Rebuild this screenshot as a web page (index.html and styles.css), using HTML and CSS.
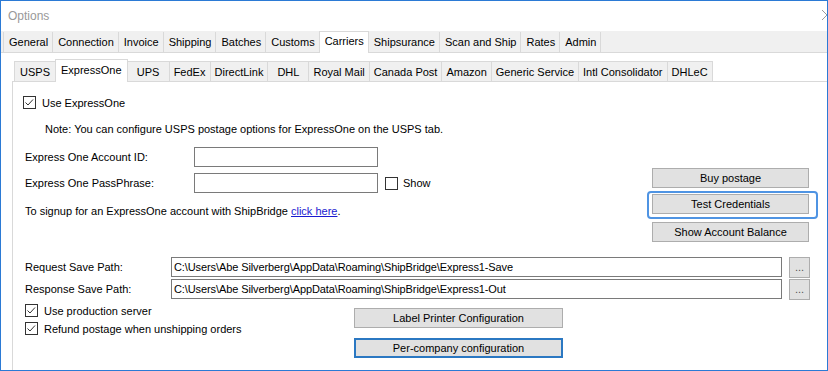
FILE: index.html
```html
<!DOCTYPE html>
<html lang="en">
<head>
    <meta charset="UTF-8">
    <meta name="viewport" content="width=device-width, initial-scale=1.0">
    <title>Options</title>
    <link rel="stylesheet" href="styles.css">
</head>
<body>
    <div class="window">
        <!-- Title bar -->
        <div class="titlebar">
            <span class="title">Options</span>
            <svg class="close" width="10" height="10" viewBox="0 0 10 10"><path d="M0 0L10 10M10 0L0 10" stroke="#9a9a9a" stroke-width="1" fill="none"/></svg>
        </div>

        <!-- Main tabs -->
        <div class="tabs">
            <div class="tab">General</div>
            <div class="tab">Connection</div>
            <div class="tab">Invoice</div>
            <div class="tab">Shipping</div>
            <div class="tab">Batches</div>
            <div class="tab">Customs</div>
            <div class="tab active">Carriers</div>
            <div class="tab">Shipsurance</div>
            <div class="tab">Scan and Ship</div>
            <div class="tab">Rates</div>
            <div class="tab last">Admin</div>
        </div>

        <div class="page">
            <!-- Carrier tabs -->
            <div class="subtabs">
                <div class="subtab">USPS</div>
                <div class="subtab active">ExpressOne</div>
                <div class="subtab">UPS</div>
                <div class="subtab">FedEx</div>
                <div class="subtab">DirectLink</div>
                <div class="subtab">DHL</div>
                <div class="subtab">Royal Mail</div>
                <div class="subtab">Canada Post</div>
                <div class="subtab">Amazon</div>
                <div class="subtab">Generic Service</div>
                <div class="subtab">Intl Consolidator</div>
                <div class="subtab last">DHLeC</div>
            </div>

            <div class="panel">
                <div class="top">
                    <div class="fields">
                        <label class="check use-check">
                            <span class="box"><svg width="11" height="11" viewBox="0 0 11 11"><path d="M1.5 5.5L4 8L9 2.5" stroke="#333" stroke-width="1" fill="none"/></svg></span>
                            Use ExpressOne
                        </label>
                        <div class="note">Note: You can configure USPS postage options for ExpressOne on the USPS tab.</div>
                        <div class="field-row">
                            <span class="field-label">Express One Account ID:</span>
                            <span class="input"></span>
                        </div>
                        <div class="field-row pass-row">
                            <span class="field-label">Express One PassPhrase:</span>
                            <span class="input"></span>
                            <label class="check show-check"><span class="box"></span>Show</label>
                        </div>
                        <div class="signup">To signup for an ExpressOne account with ShipBridge <a href="#" class="link">click here</a>.</div>
                    </div>

                    <div class="actions">
                        <button class="btn">Buy postage</button>
                        <button class="btn focus-ring">Test Credentials</button>
                        <button class="btn balance">Show Account Balance</button>
                    </div>
                </div>

                <!-- Save paths -->
                <div class="paths">
                    <div class="path-row">
                        <span class="path-label">Request Save Path:</span>
                        <span class="input path-input">C:\Users\Abe Silverberg\AppData\Roaming\ShipBridge\Express1-Save</span>
                        <button class="btn browse">...</button>
                    </div>
                    <div class="path-row">
                        <span class="path-label">Response Save Path:</span>
                        <span class="input path-input">C:\Users\Abe Silverberg\AppData\Roaming\ShipBridge\Express1-Out</span>
                        <button class="btn browse">...</button>
                    </div>
                </div>

                <div class="bottom">
                    <div class="options">
                        <label class="check">
                            <span class="box"><svg width="11" height="11" viewBox="0 0 11 11"><path d="M1.5 5.5L4 8L9 2.5" stroke="#333" stroke-width="1" fill="none"/></svg></span>
                            Use production server
                        </label>
                        <label class="check">
                            <span class="box"><svg width="11" height="11" viewBox="0 0 11 11"><path d="M1.5 5.5L4 8L9 2.5" stroke="#333" stroke-width="1" fill="none"/></svg></span>
                            Refund postage when unshipping orders
                        </label>
                    </div>
                    <div class="config">
                        <button class="btn wide">Label Printer Configuration</button>
                        <button class="btn wide default">Per-company configuration</button>
                    </div>
                </div>
            </div>
        </div>
    </div>
</body>
</html>
```

FILE: styles.css
```css
/* Reset */
* { margin: 0; padding: 0; box-sizing: border-box; }

body {
    font-family: 'Liberation Sans', Arial, sans-serif;
    font-size: 11px;
    color: #000;
    background: #ffffff;
}

/* Window frame */
.window {
    width: 828px;
    height: 371px;
    border: 1px solid #2b7ad5;
    background: #ffffff;
    overflow: hidden;
    display: flex;
    flex-direction: column;
}

/* Title bar */
.titlebar {
    height: 30px;
    flex: none;
    display: flex;
    align-items: center;
    padding-left: 7px;
    color: #999999;
    font-size: 12px;
}

.close {
    margin-left: auto;
    margin-right: -5px;
    margin-top: -2px;
}

/* Main tab strip */
.tabs {
    height: 22px;
    flex: none;
    display: flex;
    align-items: flex-end;
    padding-left: 2px;
    background: #f0f0f0;
    border-bottom: 1px solid #d9d9d9;
}

.tab {
    height: 20px;
    line-height: 20px;
    padding: 0 4px 0 5px;
    border-left: 1px solid #d9d9d9;
    white-space: nowrap;
}

.tab.last {
    border-right: 1px solid #d9d9d9;
}

.tab.active {
    height: 22px;
    margin-bottom: -1px;
    line-height: 19px;
    background: #ffffff;
    border: 1px solid #d9d9d9;
    border-bottom: none;
}

.tab.active + .tab {
    border-left: none;
}

/* Tab page */
.page {
    flex: 1;
    padding: 6px 0 0 11px;
    display: flex;
    flex-direction: column;
}

/* Carrier tab strip */
.subtabs {
    height: 23px;
    flex: none;
    display: flex;
    align-items: flex-end;
    padding-left: 2px;
    border-bottom: 1px solid #d9d9d9;
}

.subtab {
    height: 20px;
    line-height: 20px;
    min-width: 41px;
    padding: 0 4px;
    text-align: center;
    background: #f0f0f0;
    border-top: 1px solid #d9d9d9;
    border-left: 1px solid #d9d9d9;
    white-space: nowrap;
}

.subtab.last {
    border-right: 1px solid #d9d9d9;
}

.subtab.active {
    height: 23px;
    margin-bottom: -1px;
    line-height: 20px;
    padding: 0 5px;
    background: #ffffff;
    border-right: 1px solid #d9d9d9;
}

.subtab.active + .subtab {
    border-left: none;
}

/* Carrier panel */
.panel {
    flex: 1;
    border-left: 1px solid #d9d9d9;
    padding-left: 12px;
}

.top {
    display: flex;
    margin-top: 14px;
}

.fields {
    display: flex;
    flex-direction: column;
}

/* Checkboxes */
.check {
    display: flex;
    align-items: center;
    height: 13px;
    gap: 6px;
    white-space: nowrap;
}

.box {
    width: 13px;
    height: 13px;
    border: 1px solid #333333;
    background: #ffffff;
    display: flex;
    flex: none;
}

.use-check {
    margin-left: -2px;
}

.note {
    margin-top: 13px;
    padding-left: 20px;
    height: 14px;
    line-height: 14px;
}

.field-row {
    display: flex;
    align-items: center;
    margin-top: 11px;
    height: 20px;
}

.pass-row {
    margin-top: 6px;
}

.field-label {
    width: 169px;
}

.input {
    height: 20px;
    width: 184px;
    border: 1px solid #7a7a7a;
    background: #ffffff;
}

.show-check {
    margin-left: 7px;
    gap: 5px;
}

.signup {
    margin-top: 11px;
    height: 14px;
    line-height: 14px;
}

.link {
    color: #1a1ad0;
    text-decoration: underline;
}

/* Buttons */
.btn {
    font-family: 'Liberation Sans', Arial, sans-serif;
    font-size: 11px;
    color: #000;
    height: 20px;
    background: #e1e1e1;
    border: 1px solid #adadad;
    text-align: center;
}

.actions {
    margin-left: auto;
    margin-right: 18px;
    margin-top: 72px;
    display: flex;
    flex-direction: column;
    gap: 6px;
}

.actions .btn {
    width: 157px;
}

.actions .balance {
    margin-top: 2px;
}

.focus-ring {
    position: relative;
}

.focus-ring::after {
    content: '';
    position: absolute;
    left: -6px;
    right: -10px;
    top: -4px;
    bottom: -6px;
    border: 2px solid #4f94e3;
    border-radius: 4px;
}

/* Save paths */
.paths {
    margin-top: 15px;
    display: flex;
    flex-direction: column;
    gap: 2px;
}

.path-row {
    display: flex;
    align-items: center;
    height: 20px;
}

.path-label {
    width: 146px;
}

.path-input {
    width: 611px;
    padding-left: 2px;
    line-height: 18px;
    white-space: nowrap;
    overflow: hidden;
    letter-spacing: -0.1px;
}

.browse {
    width: 21px;
    height: 21px;
    margin-left: 7px;
    color: #555;
    line-height: 14px;
}

/* Bottom options */
.bottom {
    display: flex;
    margin-top: 5px;
}

.options {
    width: 329px;
    display: flex;
    flex-direction: column;
    gap: 5px;
}

.config {
    margin-top: 4px;
    display: flex;
    flex-direction: column;
    gap: 10px;
}

.btn.wide {
    width: 209px;
}

.btn.default {
    border: 2px solid #2b78c2;
}
```
